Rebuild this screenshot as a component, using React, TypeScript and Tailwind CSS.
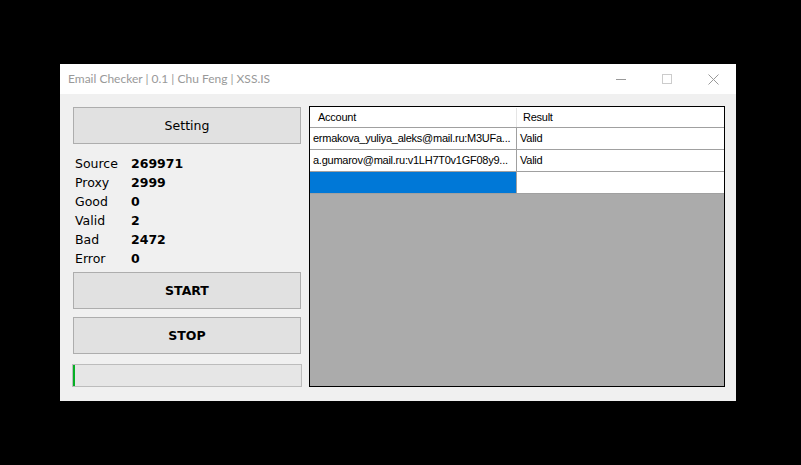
import React from 'react';

const stats: [string, string][] = [
  ['Source', '269971'],
  ['Proxy', '2999'],
  ['Good', '0'],
  ['Valid', '2'],
  ['Bad', '2472'],
  ['Error', '0'],
];

const rows = [
  { account: 'ermakova_yuliya_aleks@mail.ru:M3UFa...', result: 'Valid' },
  { account: 'a.gumarov@mail.ru:v1LH7T0v1GF08y9...', result: 'Valid' },
];

const tahoma = { fontFamily: '"DejaVu Sans", Verdana, sans-serif' };
const msSans = { fontFamily: '"Liberation Sans", Arial, sans-serif' };

function WinButton({ children, bold }: { children: React.ReactNode; bold?: boolean }) {
  return (
    <button
      className={`h-[37px] w-[228px] border border-[#adadad] bg-[#e1e1e1] pt-[2px] text-[12.5px] text-black ${bold ? 'font-bold' : ''}`}
      style={tahoma}
    >
      {children}
    </button>
  );
}

export default function App() {
  return (
    <div className="h-[465px] w-[801px] bg-black pt-[64px] pl-[60px]">
      <div className="flex h-[337px] w-[676px] flex-col bg-[#f0f0f0]">
        {/* title bar */}
        <div className="flex h-[30px] items-center bg-white">
          <span className="flex-1 pl-[8px] text-[12px] text-[#999999]" style={{ fontFamily: 'Lato, "Noto Sans", sans-serif' }}>
            Email Checker | 0.1 | Chu Feng | XSS.IS
          </span>
          <div className="flex h-full">
            <div className="flex w-[46px] items-center justify-center">
              <div className="h-px w-[10px] bg-[#999999]" />
            </div>
            <div className="flex w-[46px] items-center justify-center">
              <div className="h-[10px] w-[10px] border border-[#cccccc]" />
            </div>
            <div className="flex w-[46px] items-center justify-center">
              <svg width="11" height="11" viewBox="0 0 11 11">
                <path d="M0.5 0.5 L10.5 10.5 M10.5 0.5 L0.5 10.5" stroke="#999999" strokeWidth="1" />
              </svg>
            </div>
          </div>
        </div>

        {/* body */}
        <div className="flex flex-1">
          <div className="ml-[13px] flex w-[229px] flex-col pt-[13px]">
            <WinButton>Setting</WinButton>
            <div className="mt-[11px] flex flex-col pl-[2px] text-[12.5px] text-black" style={tahoma}>
              {stats.map(([label, value]) => (
                <div key={label} className="flex h-[19px] items-center">
                  <span className="w-[56px]">{label}</span>
                  <span className="font-bold">{value}</span>
                </div>
              ))}
            </div>
            <div className="mt-[3px] flex flex-col gap-[8px]">
              <WinButton bold>START</WinButton>
              <WinButton bold>STOP</WinButton>
            </div>
            <div className="-ml-px mt-[10px] flex h-[23px] w-[230px] border border-[#bcbcbc] bg-[#e6e6e6]">
              <div className="h-full w-[2px] bg-[#06b025]" />
            </div>
          </div>

          <div
            className="ml-[7px] mt-[12px] flex h-[281px] w-[416px] flex-col border border-black bg-[#ababab] text-[11px] tracking-[-0.25px] text-black"
            style={msSans}
          >
            <div className="flex h-[21px] border-b border-[#a0a0a0] bg-white pt-px">
              <div className="flex w-[207px] items-center border-r border-[#e5e5e5] pl-[8px]">Account</div>
              <div className="flex flex-1 items-center pl-[6px]">Result</div>
            </div>
            {rows.map((r) => (
              <div key={r.account} className="flex h-[22px] border-b border-[#a0a0a0] bg-white">
                <div className="flex w-[207px] items-center overflow-hidden whitespace-nowrap border-r border-[#a0a0a0] pl-[3px]">
                  {r.account}
                </div>
                <div className="flex flex-1 items-center pl-[3px]">{r.result}</div>
              </div>
            ))}
            <div className="flex h-[22px] border-b border-[#a0a0a0] bg-white">
              <div className="w-[207px] border-r border-[#a0a0a0] bg-[#0078d7]" />
              <div className="flex-1" />
            </div>
          </div>
        </div>
      </div>
    </div>
  );
}
